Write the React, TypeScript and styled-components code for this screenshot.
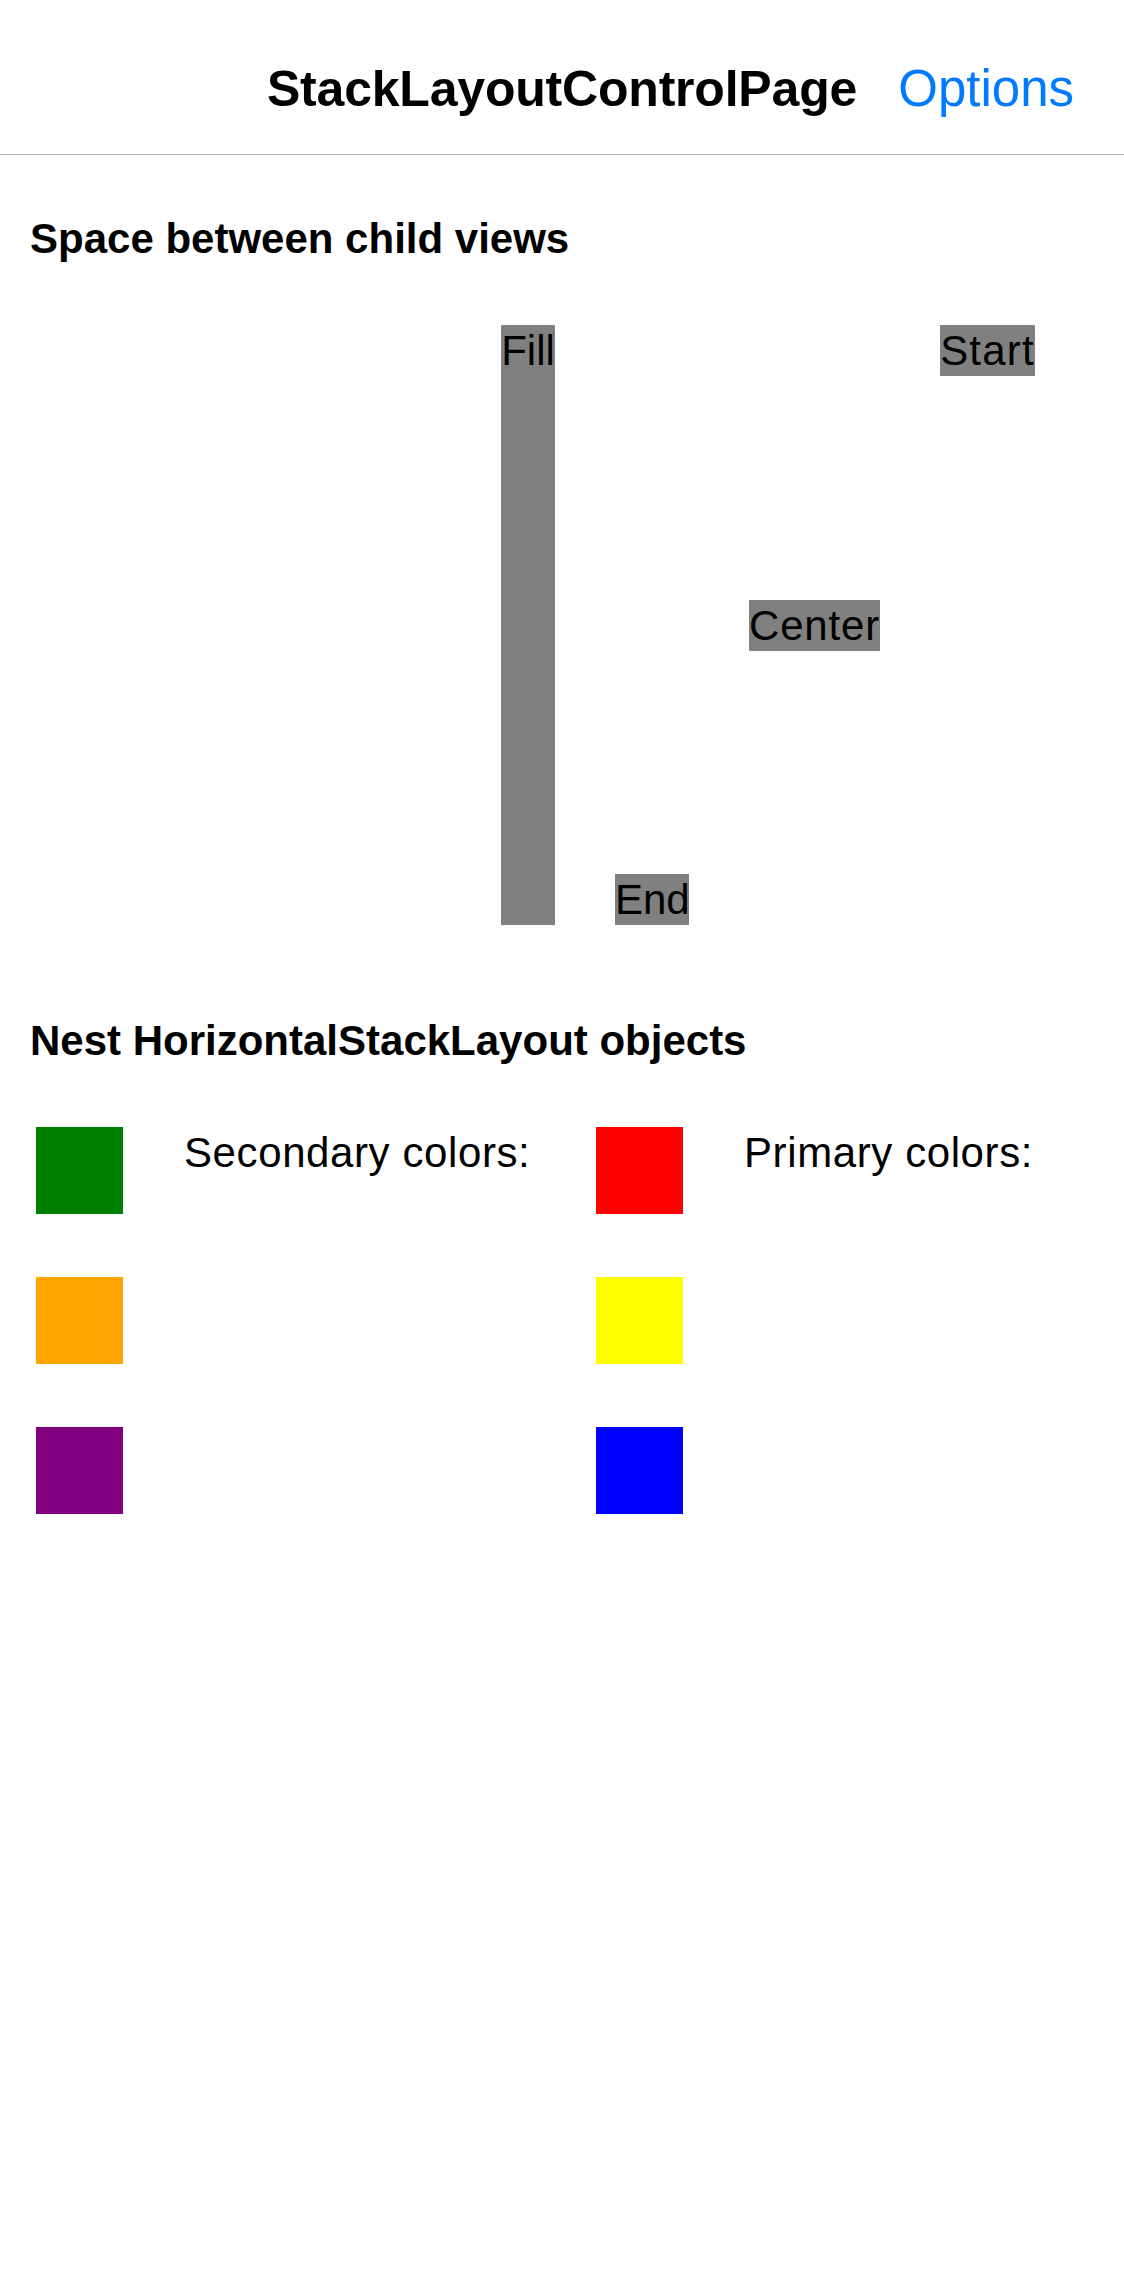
import React from "react";
import styled, { createGlobalStyle } from "styled-components";

const GlobalStyle = createGlobalStyle`
  html, body {
    margin: 0;
    padding: 0;
    background: #ffffff;
  }
  body {
    font-family: "Liberation Sans", Arial, sans-serif;
    color: #000000;
  }
`;

const tags = [
  { text: "Fill", align: "stretch", w: 54 },
  { text: "End", align: "flex-end", w: 74 },
  { text: "Center", align: "center", w: 131 },
  { text: "Start", align: "flex-start", w: 95 },
];

const secondary = ["#008000", "#ffa500", "#800080"];
const primary = ["#ff0000", "#ffff00", "#0000ff"];

const App: React.FC = () => {
  return (
    <StyledPage>
      <GlobalStyle />
      <StyledNavBar>
        <span />
        <StyledTitle>StackLayoutControlPage</StyledTitle>
        <StyledOptions>Options</StyledOptions>
      </StyledNavBar>

      <StyledContent>
        <StyledSection>
          <StyledHeading>Space between child views</StyledHeading>
          <StyledAlignRow>
            {tags.map(t => (
              <StyledTag key={t.text} $align={t.align} $w={t.w}>
                {t.text}
              </StyledTag>
            ))}
          </StyledAlignRow>
        </StyledSection>

        <StyledSection>
          <StyledHeading>Nest HorizontalStackLayout objects</StyledHeading>
          <StyledColorRow>
            <StyledSwatchColumn>
              {secondary.map(c => (
                <StyledSwatch key={c} $color={c} />
              ))}
            </StyledSwatchColumn>
            <StyledColorLabel $w={351}>Secondary colors:</StyledColorLabel>
            <StyledSwatchColumn>
              {primary.map(c => (
                <StyledSwatch key={c} $color={c} />
              ))}
            </StyledSwatchColumn>
            <StyledColorLabel $w={292}>Primary colors:</StyledColorLabel>
          </StyledColorRow>
        </StyledSection>
      </StyledContent>
    </StyledPage>
  );
};

const StyledPage = styled.div`
  width: 1124px;
  min-height: 2286px;
  background: #ffffff;
`;

const StyledNavBar = styled.header`
  display: grid;
  grid-template-columns: 1fr auto 1fr;
  align-items: start;
  height: 95px;
  padding: 59px 50px 0 50px;
  border-bottom: 1px solid #b2b2b2;
  box-sizing: content-box;
  width: 1024px;
`;

const StyledTitle = styled.div`
  font-size: 50px;
  line-height: 60px;
  font-weight: 700;
  letter-spacing: -0.2px;
  white-space: nowrap;
`;

const StyledOptions = styled.div`
  justify-self: end;
  font-size: 51px;
  line-height: 60px;
  color: #007aff;
`;

const StyledContent = styled.main`
  display: flex;
  flex-direction: column;
  gap: 90px;
  padding: 58px 0 0 30px;
`;

const StyledSection = styled.section`
  display: flex;
  flex-direction: column;
  gap: 61px;
`;

const StyledHeading = styled.h2`
  margin: 0;
  font-size: 42px;
  line-height: 51px;
  font-weight: 700;
`;

const StyledAlignRow = styled.div`
  display: flex;
  height: 600px;
  gap: 60px;
  padding-left: 471px;
`;

const StyledTag = styled.div<{ $align: string; $w: number }>`
  align-self: ${p => p.$align};
  width: ${p => p.$w}px;
  background: #808080;
  font-size: 42px;
  line-height: 51px;
  letter-spacing: ${p => (p.$w > 100 ? "0.8px" : p.$w > 90 ? "1.2px" : "0")};
  text-align: center;
  height: ${p => (p.$align === "stretch" ? "auto" : "51px")};
  white-space: nowrap;
  overflow: hidden;
`;

const StyledColorRow = styled.div`
  display: flex;
  align-items: flex-start;
  gap: 61px;
  padding-left: 6px;
`;

const StyledSwatchColumn = styled.div`
  display: flex;
  flex-direction: column;
  gap: 63px;
`;

const StyledSwatch = styled.div<{ $color: string }>`
  width: 87px;
  height: 87px;
  background: ${p => p.$color};
`;

const StyledColorLabel = styled.div<{ $w: number }>`
  width: ${p => p.$w}px;
  font-size: 42px;
  line-height: 51px;
  letter-spacing: 0.6px;
  white-space: nowrap;
`;

export default App;
